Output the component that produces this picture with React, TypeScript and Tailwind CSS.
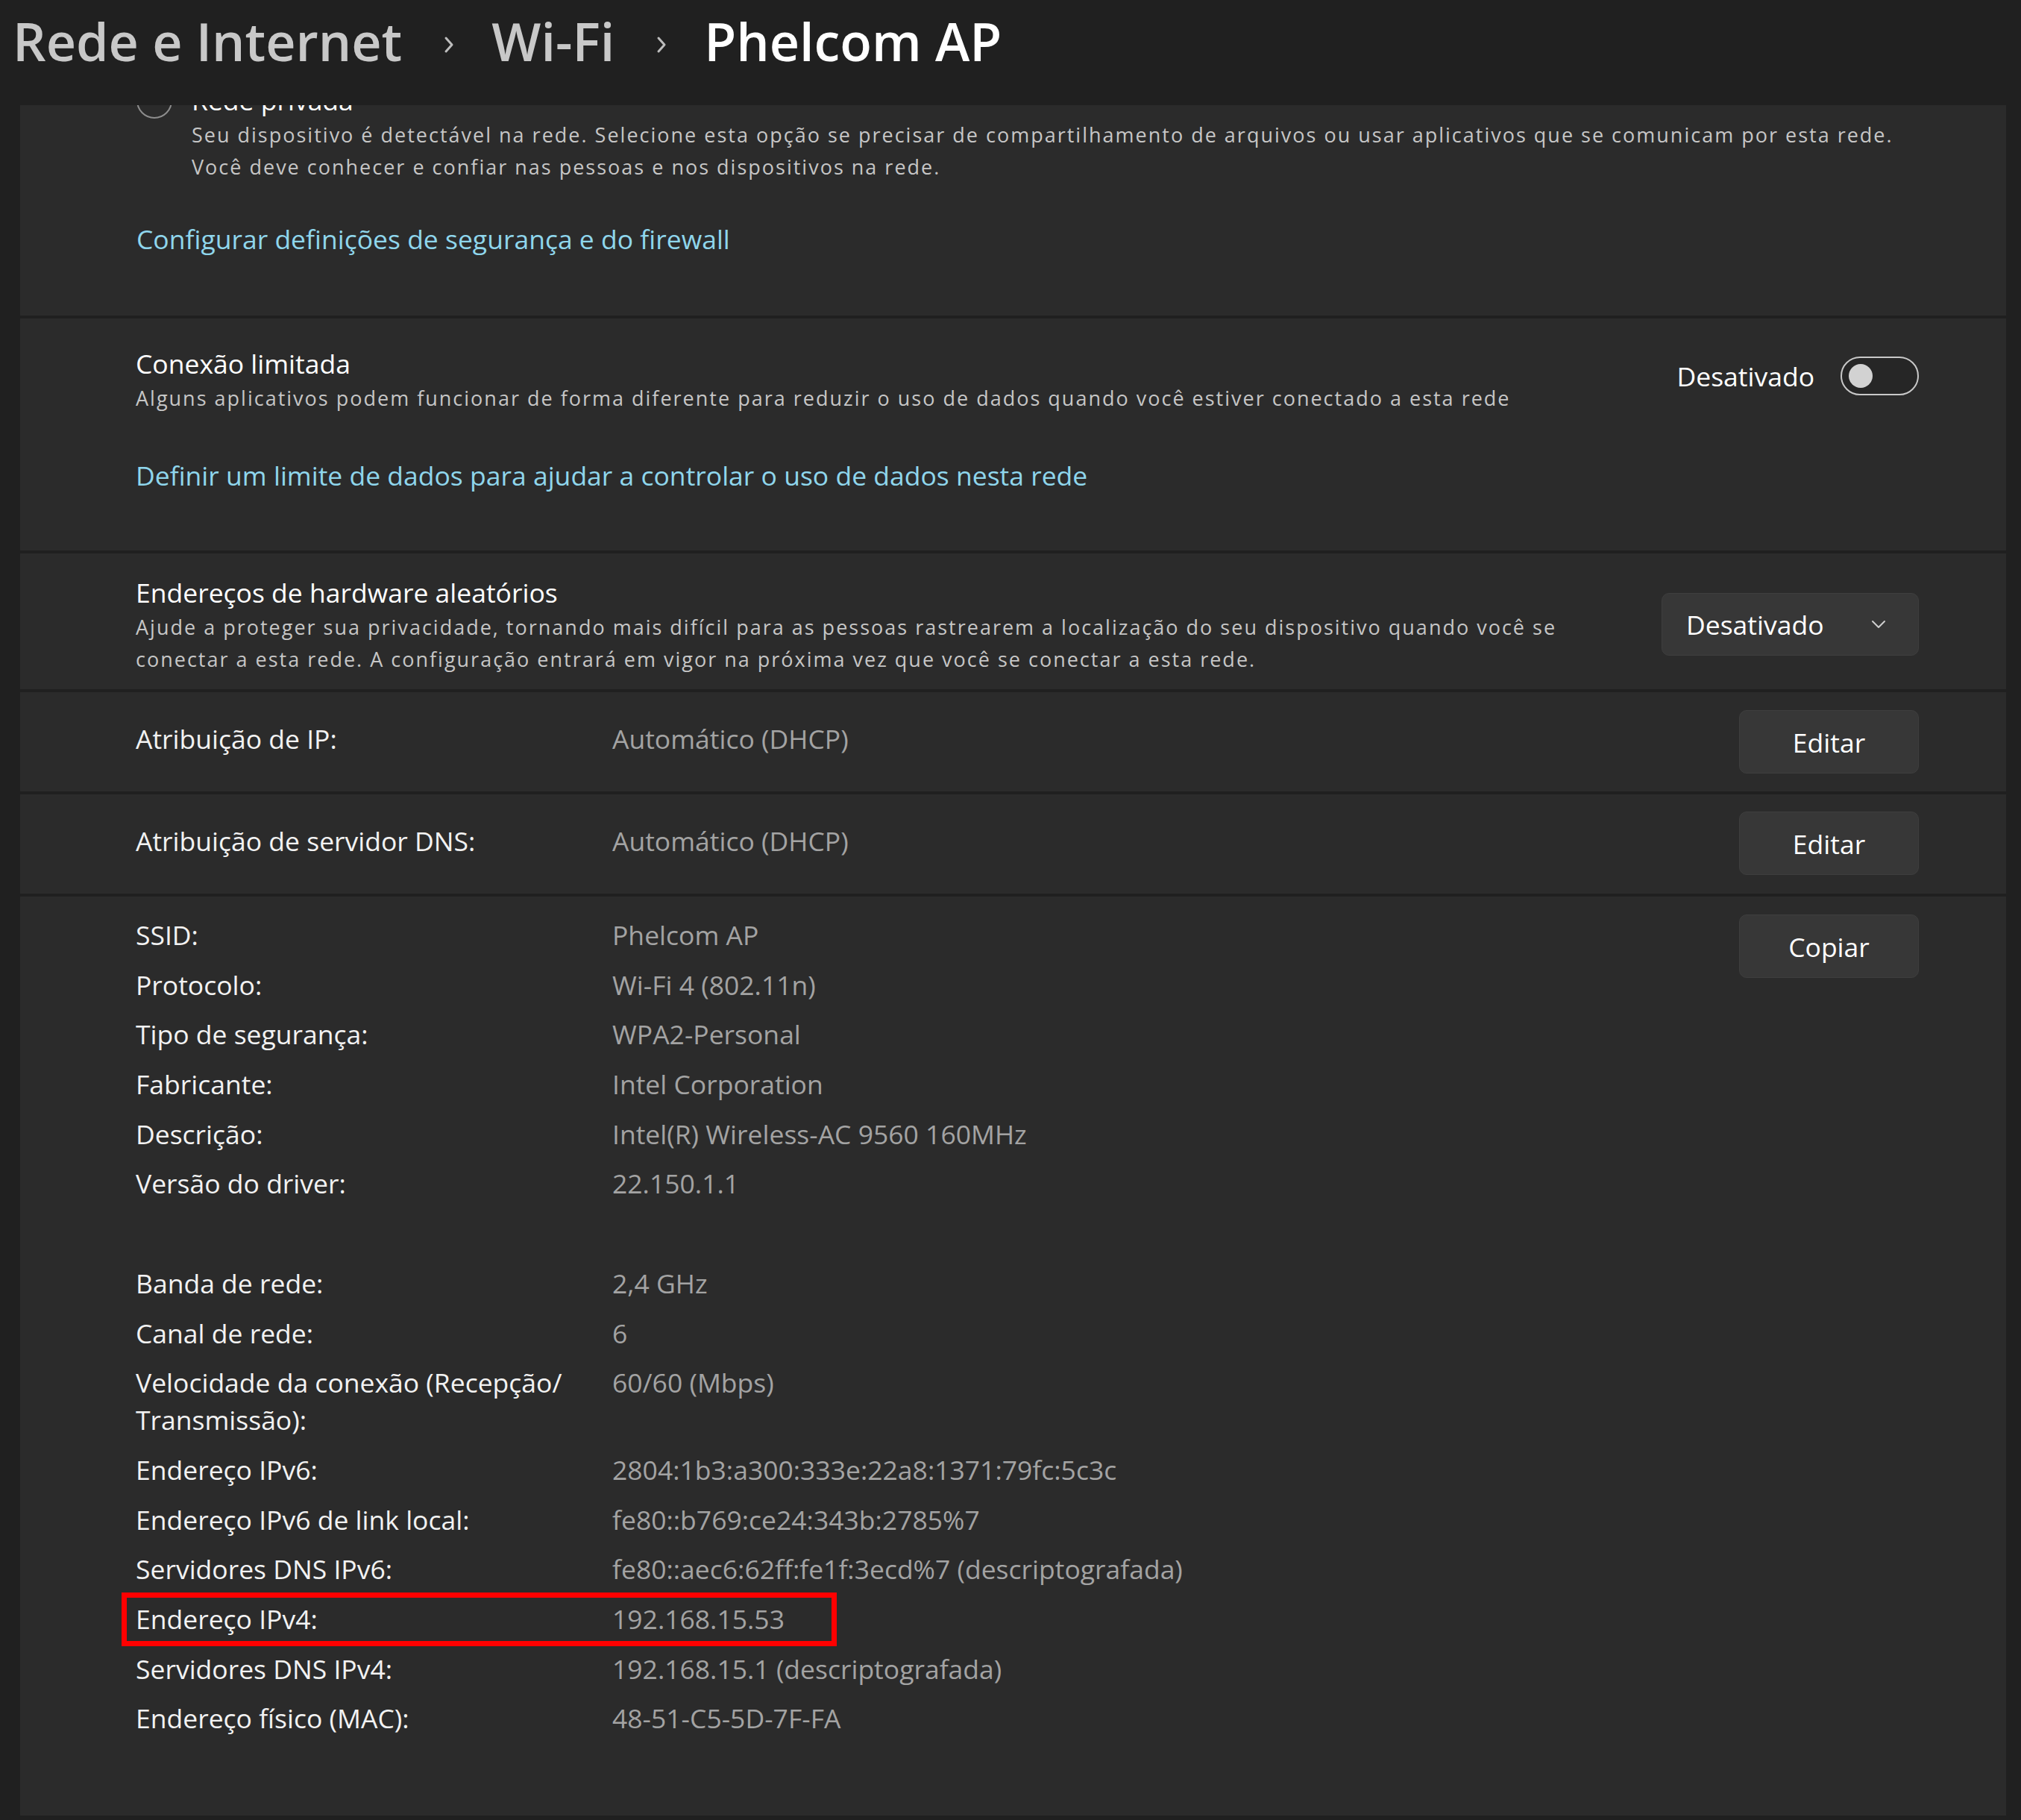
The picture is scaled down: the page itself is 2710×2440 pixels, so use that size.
const body = "text-[35.5px] leading-[50px]";
const desc = "text-[27px] leading-[43px] tracking-[2px] text-[#c6c6c6]";
const link = "text-[35.5px] leading-[50px] text-[#8fd6ec]";

function Crumb() {
  return (
    <svg className="mt-[10px] ml-[56px] mr-[50px] shrink-0" width="14" height="24" viewBox="0 0 14 24" fill="none">
      <path d="M3 3l8 9-8 9" stroke="#bdbdbd" strokeWidth="3" strokeLinecap="round" strokeLinejoin="round" />
    </svg>
  );
}

function Button({ label }: { label: string }) {
  return (
    <div className={`ml-auto shrink-0 w-[241px] h-[85px] rounded-[10px] bg-[#373737] border border-[#3e3e3e] flex items-center justify-center text-white ${body}`}>
      {label}
    </div>
  );
}

const details: [string, string][] = [
  ['SSID:', 'Phelcom AP'],
  ['Protocolo:', 'Wi-Fi 4 (802.11n)'],
  ['Tipo de segurança:', 'WPA2-Personal'],
  ['Fabricante:', 'Intel Corporation'],
  ['Descrição:', 'Intel(R) Wireless-AC 9560 160MHz'],
  ['Versão do driver:', '22.150.1.1'],
];

const details2: [string, string][] = [
  ['Endereço IPv6:', '2804:1b3:a300:333e:22a8:1371:79fc:5c3c'],
  ['Endereço IPv6 de link local:', 'fe80::b769:ce24:343b:2785%7'],
  ['Servidores DNS IPv6:', 'fe80::aec6:62ff:fe1f:3ecd%7 (descriptografada)'],
];

function Row({ label, value, marked }: { label: React.ReactNode; value: string; marked?: boolean }) {
  return (
    <div className={`relative flex ${body}`}>
      {marked && <div className="absolute left-[-19px] top-[-10px] w-[959px] h-[72px] border-[7px] border-[#ff0000]" />}
      <div className="w-[639px] shrink-0 text-[#f2f2f2]">{label}</div>
      <div className="text-[#a3a3a3]">{value}</div>
    </div>
  );
}

export default function App() {
  return (
    <div className="w-[2710px] h-[2440px] bg-[#202020] overflow-hidden flex flex-col text-white font-['Open_Sans',sans-serif]">
      <header className="h-[141px] shrink-0 flex items-center pl-[17px] pb-[32px] text-[70px] leading-[70px] font-semibold relative z-10 bg-[#202020]">
        <span className="text-[#c8c8c8]">Rede e Internet</span>
        <Crumb />
        <span className="text-[#c8c8c8]">Wi-Fi</span>
        <Crumb />
        <span className="text-white">Phelcom AP</span>
      </header>

      <main className="flex-1 min-h-0 flex flex-col gap-[4px] pl-[27px] pr-[20px] pb-[6px]">
        {/* rede privada (scrolled) */}
        <section className="-mt-[66px] bg-[#2b2b2b] pt-[34px] pb-[78px] pl-[156px] pr-[117px]">
          <div className="flex items-start">
            <div className="w-[48px] h-[48px] mt-[2px] shrink-0 rounded-full border-2 border-[#8d8d8d]" />
            <div className="ml-[26px]">
              <div className={`${body} text-white`}>Rede privada</div>
              <p className={desc}>
                Seu dispositivo é detectável na rede. Selecione esta opção se precisar de compartilhamento de arquivos ou usar aplicativos que se comunicam por esta rede.
                <br />
                Você deve conhecer e confiar nas pessoas e nos dispositivos na rede.
              </p>
            </div>
          </div>
          <div className={`mt-[50px] ${link}`}>Configurar definições de segurança e do firewall</div>
        </section>

        {/* conexão limitada */}
        <section className="bg-[#2b2b2b] pt-[35px] pb-[76px] pl-[155px] pr-[117px] flex items-start">
          <div className="flex-1">
            <div className={`${body} text-white`}>Conexão limitada</div>
            <p className={desc}>Alguns aplicativos podem funcionar de forma diferente para reduzir o uso de dados quando você estiver conectado a esta rede</p>
            <div className={`mt-[57px] ${link}`}>Definir um limite de dados para ajudar a controlar o uso de dados nesta rede</div>
          </div>
          <div className="mt-[16px] flex items-center gap-[35px] shrink-0">
            <span className={`${body} text-white`}>Desativado</span>
            <div className="w-[105px] h-[52px] rounded-full border-2 border-[#c8c8c8] bg-[#262626] flex items-center pl-[9px]">
              <div className="w-[32px] h-[32px] rounded-full bg-[#d2d2d2]" />
            </div>
          </div>
        </section>

        {/* endereços aleatórios */}
        <section className="bg-[#2b2b2b] pt-[27px] pb-[19px] pl-[155px] pr-[117px] flex items-center">
          <div className="w-[1960px]">
            <div className={`${body} text-white`}>Endereços de hardware aleatórios</div>
            <p className={desc}>Ajude a proteger sua privacidade, tornando mais difícil para as pessoas rastrearem a localização do seu dispositivo quando você se conectar a esta rede. A configuração entrará em vigor na próxima vez que você se conectar a esta rede.</p>
          </div>
          <div className="ml-auto w-[345px] h-[84px] rounded-[10px] bg-[#373737] border border-[#3e3e3e] flex items-center pl-[32px] pr-[43px]">
            <span className={`${body} text-white`}>Desativado</span>
            <svg className="ml-auto" width="20" height="12" viewBox="0 0 20 12" fill="none">
              <path d="M2 2l8 8 8-8" stroke="#cfcfcf" strokeWidth="2" strokeLinecap="round" strokeLinejoin="round" />
            </svg>
          </div>
        </section>

        {/* atribuição IP */}
        <section className="bg-[#2b2b2b] pt-[24px] pb-[24px] pl-[155px] pr-[117px] flex items-start">
          <div className={`mt-[13px] flex ${body}`}>
            <div className="w-[639px] text-[#f2f2f2]">Atribuição de IP:</div>
            <div className="text-[#a3a3a3]">Automático (DHCP)</div>
          </div>
          <Button label="Editar" />
        </section>

        {/* atribuição DNS */}
        <section className="bg-[#2b2b2b] pt-[23px] pb-[25px] pl-[155px] pr-[117px] flex items-start">
          <div className={`mt-[14px] flex ${body}`}>
            <div className="w-[639px] text-[#f2f2f2]">Atribuição de servidor DNS:</div>
            <div className="text-[#a3a3a3]">Automático (DHCP)</div>
          </div>
          <Button label="Editar" />
        </section>

        {/* propriedades */}
        <section className="flex-1 bg-[#2b2b2b] pt-[26px] pl-[155px] pr-[117px] flex items-start">
          <div className="flex flex-col gap-[16.7px]">
            {details.map(([l, v]) => (
              <Row key={l} label={l} value={v} />
            ))}
            <div className="h-[50px]" />
            <Row label="Banda de rede:" value="2,4 GHz" />
            <Row label="Canal de rede:" value="6" />
            <Row
              label={
                <>
                  Velocidade da conexão (Recepção/
                  <br />
                  Transmissão):
                </>
              }
              value="60/60 (Mbps)"
            />
            {details2.map(([l, v]) => (
              <Row key={l} label={l} value={v} />
            ))}
            <Row label="Endereço IPv4:" value="192.168.15.53" marked />
            <Row label="Servidores DNS IPv4:" value="192.168.15.1 (descriptografada)" />
            <Row label="Endereço físico (MAC):" value="48-51-C5-5D-7F-FA" />
          </div>
          <div className="ml-auto -mt-[2px] flex">
            <Button label="Copiar" />
          </div>
        </section>
      </main>
    </div>
  );
}
